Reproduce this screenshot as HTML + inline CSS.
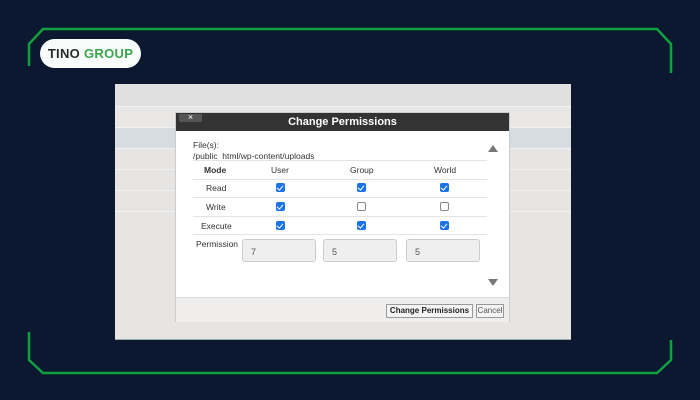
<!DOCTYPE html>
<html><head><style>
body{margin:0;width:700px;height:400px;background:#0c1830;position:relative;overflow:hidden;font-family:"Liberation Sans",sans-serif}
.a{position:absolute}
.pill{left:40px;top:39px;width:101px;height:29px;background:#f8fcfb;border-radius:15px;font-size:13px;font-weight:bold;line-height:29px;text-align:center;letter-spacing:0.3px}
.panel{left:115px;top:84px;width:456px;height:255px;background:#e6e5e3;border-bottom:1px solid #9aa}
.row{position:absolute;left:0;width:456px;height:20px;border-top:1px solid #f2f2f2}
.dlg{left:175px;top:112px;width:335px;height:210px;background:#fff;border:1px solid #ccc;box-sizing:border-box}
.tb{left:0;top:0;width:333px;height:18px;background:#333;color:#fff;font-weight:bold;font-size:11px;line-height:18px;text-align:center}
.x{left:3px;top:1px;width:23px;height:8px;background:#555;border-radius:0 0 2px 2px;color:#fff;font-size:9px;line-height:7px;text-align:center}
.t{font-size:8.5px;color:#333}
.ln{position:absolute;left:17px;width:294px;height:1px;background:#e4e4e4}
.cb{position:absolute;width:9px;height:9px;border-radius:2px;background:#1a73e8;box-sizing:border-box}
.cb::after{content:"";position:absolute;left:2px;top:0.5px;width:2.5px;height:5px;border:solid #fff;border-width:0 1.5px 1.5px 0;transform:rotate(40deg)}
.ub{position:absolute;width:9px;height:9px;border-radius:2px;border:1px solid #888;box-sizing:border-box;background:#fff}
.in{position:absolute;top:126px;width:74px;height:23px;background:#efefef;border:1px solid #ccc;border-radius:3px;box-sizing:border-box;font-size:9px;color:#555;padding:7px 0 0 8px}
.ft{left:0;top:184px;width:333px;height:24px;background:#efeeec;border-top:1px solid #ddd}
.bt{position:absolute;top:6px;height:14px;background:#f4f4f4;border:1px solid #999;box-sizing:border-box;font-size:8px;line-height:12px;text-align:center;color:#222}
</style></head><body>
<svg class="a" style="left:0;top:0" width="700" height="400">
<polyline points="29,66 29,44 43,29 657,29 671,44 671,73" fill="none" stroke="#10a040" stroke-width="2.5"/>
<polyline points="29,332 29,360 43,373 657,373 671,360 671,340" fill="none" stroke="#10a040" stroke-width="2.5"/>
</svg>
<div class="a pill"><span style="color:#2a2a2a">TINO</span> <span style="color:#3aa64a">GROUP</span></div>
<div class="a panel">
<div class="row" style="top:0;background:#e0e0e0;height:22px;border:0"></div>
<div class="row" style="top:22px;background:#e8e7e5"></div>
<div class="row" style="top:43px;background:#d5dde3"></div>
<div class="row" style="top:64px"></div>
<div class="row" style="top:85px"></div>
<div class="row" style="top:106px"></div>
<div class="row" style="top:127px"></div>
</div>
<div class="a dlg">
<div class="a tb">Change Permissions</div>
<div class="a x">×</div>
<div class="a t" style="left:17px;top:27px;line-height:11px">File(s):<br>/public_html/wp-content/uploads</div>
<svg class="a" style="left:311px;top:31px" width="12" height="145"><polygon points="1,8 6,1 11,8" fill="#777"/><polygon points="1,135 6,142 11,135" fill="#777"/></svg>
<div class="ln" style="top:47px"></div><div class="ln" style="top:66px"></div><div class="ln" style="top:84px"></div><div class="ln" style="top:103px"></div><div class="ln" style="top:121px"></div>
<div class="a t" style="left:28px;top:52px;font-weight:bold">Mode</div>
<div class="a t" style="left:95px;top:52px">User</div>
<div class="a t" style="left:174px;top:52px">Group</div>
<div class="a t" style="left:258px;top:52px">World</div>
<div class="a t" style="left:30px;top:70px">Read</div>
<div class="a t" style="left:30px;top:89px">Write</div>
<div class="a t" style="left:25px;top:108px">Execute</div>
<div class="a t" style="left:20px;top:126px">Permission</div>
<div class="cb" style="left:100px;top:70px"></div><div class="cb" style="left:181px;top:70px"></div><div class="cb" style="left:264px;top:70px"></div>
<div class="cb" style="left:100px;top:89px"></div><div class="ub" style="left:181px;top:89px"></div><div class="ub" style="left:264px;top:89px"></div>
<div class="cb" style="left:100px;top:108px"></div><div class="cb" style="left:181px;top:108px"></div><div class="cb" style="left:264px;top:108px"></div>
<div class="in" style="left:66px">7</div><div class="in" style="left:147px">5</div><div class="in" style="left:230px">5</div>
<div class="a ft">
<div class="bt" style="left:210px;width:87px;font-weight:bold">Change Permissions</div>
<div class="bt" style="left:300px;width:28px;color:#555">Cancel</div>
</div>
</div>
</body></html>
